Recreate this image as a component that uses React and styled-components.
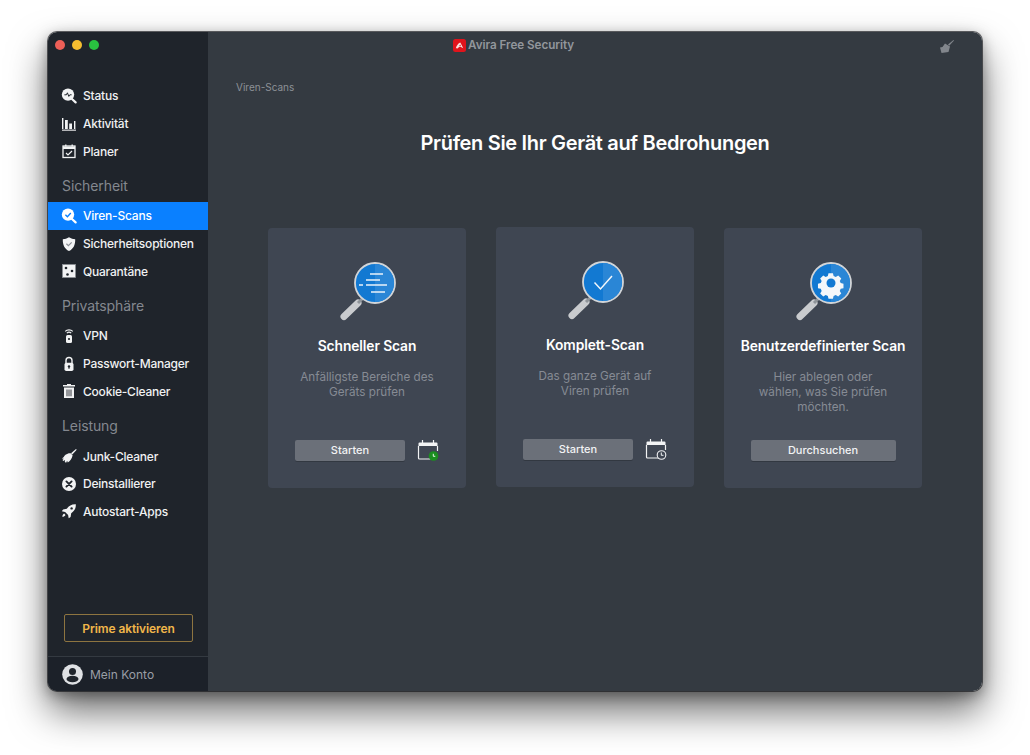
import styled, { createGlobalStyle } from 'styled-components';

const GlobalStyle = createGlobalStyle`
  html, body {
    margin: 0;
    padding: 0;
    background: #fff;
  }
  body {
    font-family: 'Inter', 'Liberation Sans', sans-serif;
    width: 1030px;
    height: 755px;
    overflow: hidden;
  }
`;

const Page = styled.div`
  padding: 32px 0 0 48px;
`;

const Window = styled.div`
  display: flex;
  width: 934px;
  height: 659px;
  border-radius: 9px;
  overflow: hidden;
  box-shadow: 0 0 0 1px rgba(20, 22, 26, 0.65), 0 20px 38px rgba(0, 0, 0, 0.58), 0 4px 14px rgba(0, 0, 0, 0.35);
`;

const Sidebar = styled.aside`
  display: flex;
  flex-direction: column;
  width: 160px;
  flex-shrink: 0;
  background: #1f242b;
`;

const Lights = styled.div`
  display: flex;
  gap: 7px;
  height: 50px;
  padding: 8px 0 0 7px;
  box-sizing: border-box;
`;

const Light = styled.span`
  width: 10px;
  height: 10px;
  border-radius: 50%;
  background: ${({ $color }) => $color};
`;

const Nav = styled.nav`
  display: flex;
  flex-direction: column;
  flex: 1;
`;

const Group = styled.div`
  display: flex;
  flex-direction: column;
`;

const GroupTitle = styled.div`
  height: 27px;
  margin-top: 10px;
  padding-left: 14px;
  font-size: 14px;
  line-height: 22px;
  letter-spacing: -0.1px;
  color: #84888f;
`;

const NavItem = styled.div`
  display: flex;
  align-items: center;
  height: 27.7px;
  padding-left: 13px;
  gap: 6px;
  font-size: 12px;
  font-weight: 500;
  letter-spacing: -0.22px;
  color: ${({ $active }) => ($active ? '#fff' : '#f0f1f2')};
  background: ${({ $active }) => ($active ? '#0a80ff' : 'transparent')};
  svg {
    width: 16px;
    height: 16px;
    flex-shrink: 0;
  }
`;

const PrimeButton = styled.button`
  align-self: flex-start;
  width: 129px;
  height: 28px;
  margin: 0 0 14px 16px;
  padding: 0;
  border: 1px solid #8d7440;
  border-radius: 2px;
  background: transparent;
  color: #f0b64a;
  font-family: inherit;
  font-size: 12px;
  font-weight: 600;
  letter-spacing: -0.1px;
`;

const Account = styled.div`
  display: flex;
  align-items: center;
  gap: 7px;
  box-sizing: border-box;
  height: 35px;
  padding-left: 14px;
  border-top: 1px solid #343a41;
  background: #1c2129;
  font-size: 12px;
  color: #9a9ea6;
  svg {
    width: 21px;
    height: 21px;
  }
`;

const Main = styled.main`
  display: flex;
  flex-direction: column;
  flex: 1;
  background: #343a41;
`;

const TitleBar = styled.header`
  display: flex;
  align-items: center;
  justify-content: space-between;
  height: 26px;
  padding: 0 28px 0 245px;
`;

const AppName = styled.div`
  display: flex;
  align-items: center;
  gap: 2px;
  font-size: 11.7px;
  font-weight: 600;
  letter-spacing: -0.05px;
  color: #92969c;
  svg {
    width: 13px;
    height: 13px;
  }
`;

const Broom = styled.svg`
  width: 15px;
  height: 15px;
  margin-top: 2px;
`;

const Breadcrumb = styled.div`
  margin: 23px 0 0 28px;
  font-size: 10px;
  line-height: 12px;
  color: #8d9197;
`;

const Heading = styled.h1`
  margin: 36px 0 0;
  font-size: 20px;
  line-height: 28px;
  font-weight: 600;
  letter-spacing: -0.32px;
  text-align: center;
  color: #fff;
`;

const Cards = styled.section`
  display: flex;
  align-items: flex-start;
  justify-content: center;
  gap: 29.5px;
  margin-top: 71px;
`;

const Card = styled.article`
  display: flex;
  flex-direction: column;
  align-items: center;
  box-sizing: border-box;
  width: 198.5px;
  height: 260px;
  margin-top: ${({ $raised }) => ($raised ? '-1px' : '0')};
  padding-top: 33px;
  border-radius: 4px;
  background: #3f4652;
`;

const ScanIcon = styled.svg`
  width: 60px;
  height: 60px;
  margin-left: -2px;
`;

const CardTitle = styled.h2`
  margin: 15px 0 0;
  font-size: 13.8px;
  line-height: 20px;
  font-weight: 600;
  letter-spacing: -0.1px;
  color: #fff;
  white-space: nowrap;
`;

const CardText = styled.p`
  flex: 1;
  margin: 14px 0 0;
  width: 170px;
  font-size: 11.7px;
  line-height: 15px;
  text-align: center;
  color: #868b94;
`;

const Actions = styled.div`
  display: flex;
  align-items: center;
  gap: 12px;
  height: 24px;
  margin-bottom: 26px;
`;

const ActionButton = styled.button`
  width: ${({ $wide }) => ($wide ? '145px' : '110px')};
  height: 21px;
  padding: 0;
  border: 0;
  border-radius: 2px;
  background: #6b7079;
  box-shadow: 0 1px 0 rgba(0, 0, 0, 0.2);
  color: #f2f3f4;
  font-family: inherit;
  font-size: 11px;
  font-weight: 500;
`;

const CalendarIcon = styled.svg`
  width: 22px;
  height: 22px;
`;

// sidebar icons
const StatusIcon = () => (
  <svg viewBox="0 0 16 16">
    <circle cx="7" cy="6.6" r="6.200" fill="#f2f3f4" />
    <path d="M3.400 6.800h2l1-2 1.400 3.600 1-1.600h1.800" fill="none" stroke="#1f242b" strokeWidth="1" />
    <path d="M11 11l3.600 3.400" stroke="#f2f3f4" strokeWidth="2.200" strokeLinecap="round" />
  </svg>
);

const ActivityIcon = () => (
  <svg viewBox="0 0 16 16" fill="#f2f3f4">
    <rect x="1" y="2" width="1.400" height="11" />
    <rect x="4" y="4" width="2.800" height="9" />
    <rect x="8.200" y="7.500" width="2.800" height="5.500" />
    <rect x="13" y="5" width="1.400" height="8" />
    <rect x="1" y="13.600" width="14" height="1.100" />
  </svg>
);

const PlannerIcon = () => (
  <svg viewBox="0 0 16 16" fill="none" stroke="#f2f3f4">
    <rect x="2" y="3" width="12" height="11.500" strokeWidth="1.300" />
    <path d="M2 4.800h12" strokeWidth="2.600" />
    <path d="M4.800 1.400v2M11.200 1.400v2" strokeWidth="1.300" />
    <path d="M5 10l2 2 4-4" strokeWidth="1.200" />
  </svg>
);

const ScanNavIcon = () => (
  <svg viewBox="0 0 16 16">
    <circle cx="7" cy="6.600" r="6.200" fill="#fff" />
    <path d="M4.400 6.800l2 1.900 3.400-3.600" fill="none" stroke="#0a80ff" strokeWidth="1.400" />
    <path d="M11 11l3.600 3.400" stroke="#fff" strokeWidth="2.200" strokeLinecap="round" />
  </svg>
);

const ShieldIcon = () => (
  <svg viewBox="0 0 16 16">
    <path d="M8 1.200c2 1.300 4 1.900 6.200 2 .2 5.400-1.700 9.800-6.200 11.800C3.500 13 1.600 8.600 1.800 3.200 4 3.100 6 2.500 8 1.200z" fill="#f2f3f4" />
    <path d="M5.400 7.800l2 1.900 3.300-3.300" fill="none" stroke="#8b8f95" strokeWidth="1.200" />
  </svg>
);

const QuarantineIcon = () => (
  <svg viewBox="0 0 16 16">
    <rect x="1.500" y="1.500" width="13" height="13" fill="#f2f3f4" stroke="#8b8f95" strokeWidth=".8" />
    <circle cx="5" cy="5" r="1.300" fill="#1f242b" />
    <circle cx="11" cy="8" r="1.300" fill="#1f242b" />
    <circle cx="6.500" cy="11.500" r="1.300" fill="#1f242b" />
  </svg>
);

const VpnIcon = () => (
  <svg viewBox="0 0 16 16">
    <path d="M4.200 3.400a5.400 5.400 0 0 1 7.600 0M5.800 5.100a3.200 3.200 0 0 1 4.400 0" fill="none" stroke="#f2f3f4" strokeWidth="1.100" />
    <rect x="5" y="7" width="6" height="8" rx="1.500" fill="#f2f3f4" />
    <circle cx="8" cy="11" r="1.100" fill="#1f242b" />
  </svg>
);

const LockIcon = () => (
  <svg viewBox="0 0 16 16">
    <path d="M5 7.500V4.500a3 3 0 0 1 6 0v3" fill="none" stroke="#f2f3f4" strokeWidth="1.400" />
    <rect x="3.500" y="6.800" width="9" height="8.200" rx="1.800" fill="#f2f3f4" />
    <circle cx="8" cy="10.400" r="1.200" fill="#1f242b" />
    <rect x="7.500" y="10.500" width="1" height="2.400" fill="#1f242b" />
  </svg>
);

const TrashIcon = () => (
  <svg viewBox="0 0 16 16">
    <path d="M6 2V1h4v1h4v1.600H2V2z" fill="#f2f3f4" />
    <path d="M3 4.500h10V15H3z" fill="#f2f3f4" />
    <path d="M6 6.500v6.800M8 6.500v6.800M10 6.500v6.800" stroke="#1f242b" strokeWidth=".9" />
  </svg>
);

const JunkIcon = () => (
  <svg viewBox="0 0 16 16">
    <path d="M15 1l-5 4.200 1.300 1.400L15.700 1.700z" fill="#f2f3f4" />
    <path d="M9.600 5.200l2 2c-.4 3-2.500 5.800-4.800 7.200l-.7-1.700-1 2.100-1.300-.8.300-1.900-1.700 1-1-1.100 1.500-1.300-2-.3C2.500 10 3 8.200 4.500 6.800c1.600-1.300 3.400-1.800 5.100-1.600z" fill="#f2f3f4" />
  </svg>
);

const CloseIcon = () => (
  <svg viewBox="0 0 16 16">
    <circle cx="8" cy="8" r="7" fill="#f2f3f4" />
    <path d="M5.400 5.400l5.200 5.200M10.600 5.400l-5.200 5.200" stroke="#1f242b" strokeWidth="1.900" strokeLinecap="round" />
  </svg>
);

const RocketIcon = () => (
  <svg viewBox="0 0 16 16">
    <path d="M14.800 1.200c-4-.2-6.800 1.300-9 4.600l-3.700.6L.8 8.300l3.300.6 3 3 .6 3.300 1.900-1.300.6-3.700c3.300-2.200 4.800-5 4.600-9z" fill="#f2f3f4" />
    <circle cx="10.600" cy="5.400" r="1.200" fill="#1f242b" />
    <path d="M3.200 10.600c-1.100.6-1.700 1.600-1.900 3.200 1.600-.2 2.600-.8 3.200-1.900z" fill="#f2f3f4" />
  </svg>
);

const UserIcon = () => (
  <svg viewBox="0 0 21 21">
    <circle cx="10.500" cy="10.500" r="10.300" fill="#dfe1e4" />
    <circle cx="10.500" cy="7.400" r="3.500" fill="#1f242b" />
    <ellipse cx="10.500" cy="15" rx="6" ry="3.300" fill="#1f242b" />
  </svg>
);

// large scan icons
const ScanGlyph = ({ children }) => (
  <ScanIcon viewBox="0 0 60 60">
    <path d="M8 55.500L22 42" stroke="#c9cbce" strokeWidth="7" strokeLinecap="round" />
    <path d="M22 42l5-5" stroke="#8f9499" strokeWidth="3" />
    <circle cx="39" cy="22" r="20" fill="#1279d2" stroke="#d2d5d8" strokeWidth="1.800" />
    <path d="M39 3a19 19 0 0 1 0 38z" fill="#2a86d6" />
    {children}
  </ScanIcon>
);

const QuickGlyph = () => (
  <ScanGlyph>
    <path d="M34 13h13M30 19h14M23 24h4M30 24h21M35 31h14" stroke="#e9f2fa" strokeWidth="1.300" fill="none" />
  </ScanGlyph>
);

const CheckGlyph = () => (
  <ScanGlyph>
    <path d="M30.500 22.500l6 6.500 11.500-13" stroke="#f2f7fb" strokeWidth="1.500" fill="none" />
  </ScanGlyph>
);

const GearGlyph = () => (
  <ScanGlyph>
    <path
      d="M36.500 11h5l.8 3.200 2.400 1 2.800-1.700 3.500 3.500-1.700 2.800 1 2.400 3.200.8v5l-3.200.8-1 2.400 1.700 2.800-3.500 3.500-2.800-1.700-2.400 1-.8 3.200h-5l-.8-3.200-2.400-1-2.800 1.700-3.500-3.500 1.700-2.800-1-2.400-3.200-.8v-5l3.200-.8 1-2.400-1.700-2.800 3.500-3.500 2.800 1.700 2.400-1z"
      fill="#f4f7fa"
      transform="translate(4.400 2.500) scale(.88)"
    />
    <circle cx="39" cy="22" r="4.500" fill="#1279d2" />
  </ScanGlyph>
);

const CalendarBase = ({ children }) => (
  <CalendarIcon viewBox="0 0 22 22">
    <path d="M5.500 1v3M16.500 1v3" stroke="#f2f3f4" strokeWidth="1.200" />
    <path d="M1.500 7V4.500a1 1 0 0 1 1-1h17a1 1 0 0 1 1 1V7z" fill="#f2f3f4" />
    <path d="M1.500 7v12a1 1 0 0 0 1 1H14M20.500 7v5" fill="none" stroke="#f2f3f4" strokeWidth="1.200" />
    {children}
  </CalendarIcon>
);

const CalendarGreen = () => (
  <CalendarBase>
    <circle cx="16.500" cy="17" r="4.800" fill="#1b8e1f" />
    <path d="M16.300 14.800V17.300h2" fill="none" stroke="#e8f5e8" strokeWidth="1" />
  </CalendarBase>
);

const CalendarClock = () => (
  <CalendarBase>
    <circle cx="16.500" cy="17" r="4.300" fill="#3f4652" stroke="#f2f3f4" strokeWidth="1.100" />
    <path d="M16.300 14.500V17.300h2.200" fill="none" stroke="#f2f3f4" strokeWidth="1" />
  </CalendarBase>
);

const AviraLogo = () => (
  <svg viewBox="0 0 13 13">
    <rect width="13" height="13" rx="2.500" fill="#e0141c" />
    <path d="M2.800 9.200C3.600 6.600 5.200 4.400 7.300 3.600l3 5.600-2.400-1.200H5.900L4.800 9.600c-.6-.4-1.300-.5-2-.4z" fill="#f8dede" />
    <path d="M6.200 7.200c.2-.7.500-1.200 1-1.600l.8 1.600z" fill="#e0141c" />
  </svg>
);

const navGroups = [
  {
    items: [
      { label: 'Status', Icon: StatusIcon },
      { label: 'Aktivität', Icon: ActivityIcon },
      { label: 'Planer', Icon: PlannerIcon },
    ],
  },
  {
    title: 'Sicherheit',
    items: [
      { label: 'Viren-Scans', Icon: ScanNavIcon, active: true },
      { label: 'Sicherheitsoptionen', Icon: ShieldIcon },
      { label: 'Quarantäne', Icon: QuarantineIcon },
    ],
  },
  {
    title: 'Privatsphäre',
    items: [
      { label: 'VPN', Icon: VpnIcon },
      { label: 'Passwort-Manager', Icon: LockIcon },
      { label: 'Cookie-Cleaner', Icon: TrashIcon },
    ],
  },
  {
    title: 'Leistung',
    items: [
      { label: 'Junk-Cleaner', Icon: JunkIcon },
      { label: 'Deinstallierer', Icon: CloseIcon },
      { label: 'Autostart-Apps', Icon: RocketIcon },
    ],
  },
];

const scans = [
  {
    title: 'Schneller Scan',
    text: ['Anfälligste Bereiche des', 'Geräts prüfen'],
    Glyph: QuickGlyph,
    button: 'Starten',
    Calendar: CalendarGreen,
  },
  {
    title: 'Komplett-Scan',
    text: ['Das ganze Gerät auf', 'Viren prüfen'],
    Glyph: CheckGlyph,
    button: 'Starten',
    Calendar: CalendarClock,
    raised: true,
  },
  {
    title: 'Benutzerdefinierter Scan',
    text: ['Hier ablegen oder', 'wählen, was Sie prüfen', 'möchten.'],
    Glyph: GearGlyph,
    button: 'Durchsuchen',
    wide: true,
  },
];

export default function App() {
  return (
    <Page>
      <GlobalStyle />
      <Window>
        <Sidebar>
          <Lights>
            <Light $color="#ed5f57" />
            <Light $color="#f5bd30" />
            <Light $color="#29c140" />
          </Lights>
          <Nav>
            {navGroups.map((group, i) => (
              <Group key={i}>
                {group.title && <GroupTitle>{group.title}</GroupTitle>}
                {group.items.map(({ label, Icon, active }) => (
                  <NavItem key={label} $active={active}>
                    <Icon />
                    {label}
                  </NavItem>
                ))}
              </Group>
            ))}
          </Nav>
          <PrimeButton>Prime aktivieren</PrimeButton>
          <Account>
            <UserIcon />
            Mein Konto
          </Account>
        </Sidebar>
        <Main>
          <TitleBar>
            <AppName>
              <AviraLogo />
              Avira Free Security
            </AppName>
            <Broom viewBox="0 0 15 15">
              <path d="M14.500 1L9 5.500l1.200 1.200L15 1.500z" fill="#82868c" />
              <path d="M6 4.500l5 3-1.500 5.500-7 1L1 8.500l2.500-.5z" fill="#82868c" />
            </Broom>
          </TitleBar>
          <Breadcrumb>Viren-Scans</Breadcrumb>
          <Heading>Prüfen Sie Ihr Gerät auf Bedrohungen</Heading>
          <Cards>
            {scans.map(({ title, text, Glyph, button, Calendar, raised, wide }) => (
              <Card key={title} $raised={raised}>
                <Glyph />
                <CardTitle>{title}</CardTitle>
                <CardText>
                  {text.map((line) => (
                    <span key={line}>
                      {line}
                      <br />
                    </span>
                  ))}
                </CardText>
                <Actions>
                  <ActionButton $wide={wide}>{button}</ActionButton>
                  {Calendar && <Calendar />}
                </Actions>
              </Card>
            ))}
          </Cards>
        </Main>
      </Window>
    </Page>
  );
}
